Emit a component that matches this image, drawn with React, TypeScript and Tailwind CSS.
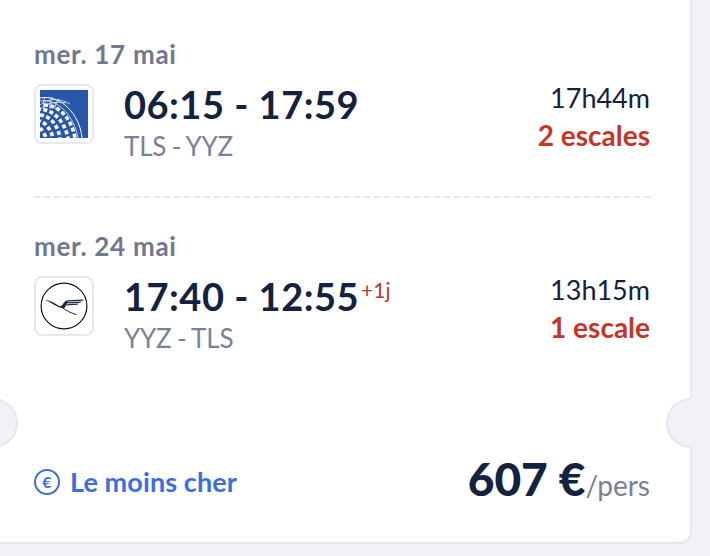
const FONT = "font-['Lato','Inter',sans-serif]";

function UnitedLogo() {
  return (
    <svg viewBox="0 0 48 48" className="h-12 w-12">
      <defs>
        <clipPath id="ua-clip">
          <rect width="48" height="48" />
        </clipPath>
      </defs>
      <rect width="48" height="48" fill="#2856a8" />
      <g clipPath="url(#ua-clip)" fill="none" stroke="#fff">
        {/* globe outline and thin upper lines */}
        <path d="M0 8C20 4 40 24 42 48" strokeWidth="1" />
        <path d="M0 11C18 8 34 26 38 48" strokeWidth="0.7" />
        <path d="M0 15C8 8 20 8 30 14" strokeWidth="0.7" />
        <path d="M0 20C6 13 16 11 26 13" strokeWidth="0.7" />
        <path d="M5 7C3 12 3 15 4 20" strokeWidth="0.7" />
        <path d="M12 7C10 12 9 15 10 19" strokeWidth="0.7" />
        <path d="M19 9C16 13 15 15 15 19" strokeWidth="0.7" />
        {/* checker bands following the meridians */}
        <path d="M4 15C20 15 32 30 35 48" strokeWidth="3.6" strokeDasharray="4 2.4" />
        <path d="M0 19C15 20 25 33 28 48" strokeWidth="3.6" strokeDasharray="4 2.4" strokeDashoffset="3" />
        <path d="M0 25C11 26 18 36 20 48" strokeWidth="3.6" strokeDasharray="4 2.4" />
        <path d="M0 31C6 33 11 40 13 48" strokeWidth="3.6" strokeDasharray="4 2.4" strokeDashoffset="3" />
        <path d="M0 38C2 40 5 44 6 48" strokeWidth="3.6" strokeDasharray="4 2.4" />
      </g>
    </svg>
  );
}

function LufthansaLogo() {
  return (
    <svg viewBox="0 0 48 48" className="h-12 w-12">
      <circle cx="24" cy="24" r="22.9" fill="#fff" stroke="#14161f" strokeWidth="1.2" />
      {/* crane: neck and body, legs, wing feathers */}
      <path
        d="M4.5 18C9.5 18.2 13.5 20.4 17 22.8C19 24.2 20.6 24.4 22 23.4C23.4 21.4 24.8 19.4 26.6 18.6L28.4 19.2C26.8 21.6 25.6 24 24.6 26C22.4 26.4 19.4 25.6 16.4 24C12.8 22 9 19.6 4.5 18Z"
        fill="#1c2540"
      />
      <path d="M22 25.4C26 28.6 31 31 36.5 32.6" fill="none" stroke="#1c2540" strokeWidth="1" />
      <path
        d="M27 18.2L44 17.6L42.6 18.7L28.4 19.4ZM27.6 20.2L41.6 19.6L40.2 20.7L27.4 21.4ZM26.6 22.2L38.8 21.6L37.4 22.7L26 23.4Z"
        fill="#1c2540"
      />
    </svg>
  );
}

type FlightProps = {
  date: string;
  logo: React.ReactNode;
  times: string;
  dayOffset?: string;
  route: string;
  duration: string;
  stops: string;
};

function Flight({ date, logo, times, dayOffset, route, duration, stops }: FlightProps) {
  return (
    <div>
      <div className="text-[26px] leading-[30px] font-bold tracking-[0.7px] text-[#6f7890]">{date}</div>
      <div className="mt-[15px] flex items-start">
        <div className="flex h-[60px] w-[60px] items-center justify-center rounded-lg border-2 border-[#e8e9ee] bg-white">
          {logo}
        </div>
        <div className="ml-[30px] flex-1">
          <div className="flex items-start text-[#14213f]">
            <span className="text-[38px] leading-[40px] font-bold tracking-[0.5px]">{times}</span>
            {dayOffset && (
              <span className="ml-[2px] text-[21px] leading-[28px] text-[#c5352a]">{dayOffset}</span>
            )}
          </div>
          <div className="mt-[6px] text-[26px] leading-[32px] tracking-[-0.2px] [word-spacing:-1px] text-[#79819a]">
            {route}
          </div>
        </div>
        <div className="-mt-[1px] text-right">
          <div className="text-[27px] leading-[30px] text-[#14213f]">{duration}</div>
          <div className="mt-[5px] text-[28px] leading-[34px] font-bold text-[#c5352a]">{stops}</div>
        </div>
      </div>
    </div>
  );
}

export default function App() {
  return (
    <div className={`h-[556px] w-[710px] overflow-hidden bg-[#f1f2f8] ${FONT}`}>
      <div className="relative h-[544px] w-[692px] rounded-br-xl border-r-2 border-b-2 border-[#e6e7ed] bg-white pt-[39px] pr-[40px] pl-[34px]">
        <Flight
          date="mer. 17 mai"
          logo={<UnitedLogo />}
          times="06:15 - 17:59"
          route="TLS - YYZ"
          duration="17h44m"
          stops="2 escales"
        />
        <div className="mt-[34px] mb-[33px] border-t-2 border-dashed border-[#e6e7ed]" />
        <Flight
          date="mer. 24 mai"
          logo={<LufthansaLogo />}
          times="17:40 - 12:55"
          dayOffset="+1j"
          route="YYZ - TLS"
          duration="13h15m"
          stops="1 escale"
        />

        <div className="mt-[101px] flex items-end justify-between">
          <div className="flex items-center gap-[10px] pb-[5px] text-[#3f6ddf]">
            <div className="flex h-[26px] w-[26px] items-center justify-center rounded-full border-2 border-[#3f6ddf] text-[16px] font-bold">
              €
            </div>
            <span className="text-[27px] leading-[32px] font-bold tracking-[0.1px]">Le moins cher</span>
          </div>
          <div className="flex items-baseline">
            <span className="text-[46px] leading-[48px] font-black text-[#14213f]">607 €</span>
            <span className="text-[28px] leading-[32px] text-[#79819a]">/pers</span>
          </div>
        </div>

        {/* ticket notches */}
        <div className="absolute top-[398px] left-[-32px] h-[50px] w-[50px] rounded-full border-2 border-[#e6e7ed] bg-[#f1f2f8]" />
        <div className="absolute top-[398px] right-[-26px] h-[50px] w-[50px] rounded-full border-2 border-[#e6e7ed] bg-[#f1f2f8]" />
        <div className="absolute top-[398px] right-[-26px] h-[50px] w-[26px] bg-[#f1f2f8]" />
      </div>
    </div>
  );
}
